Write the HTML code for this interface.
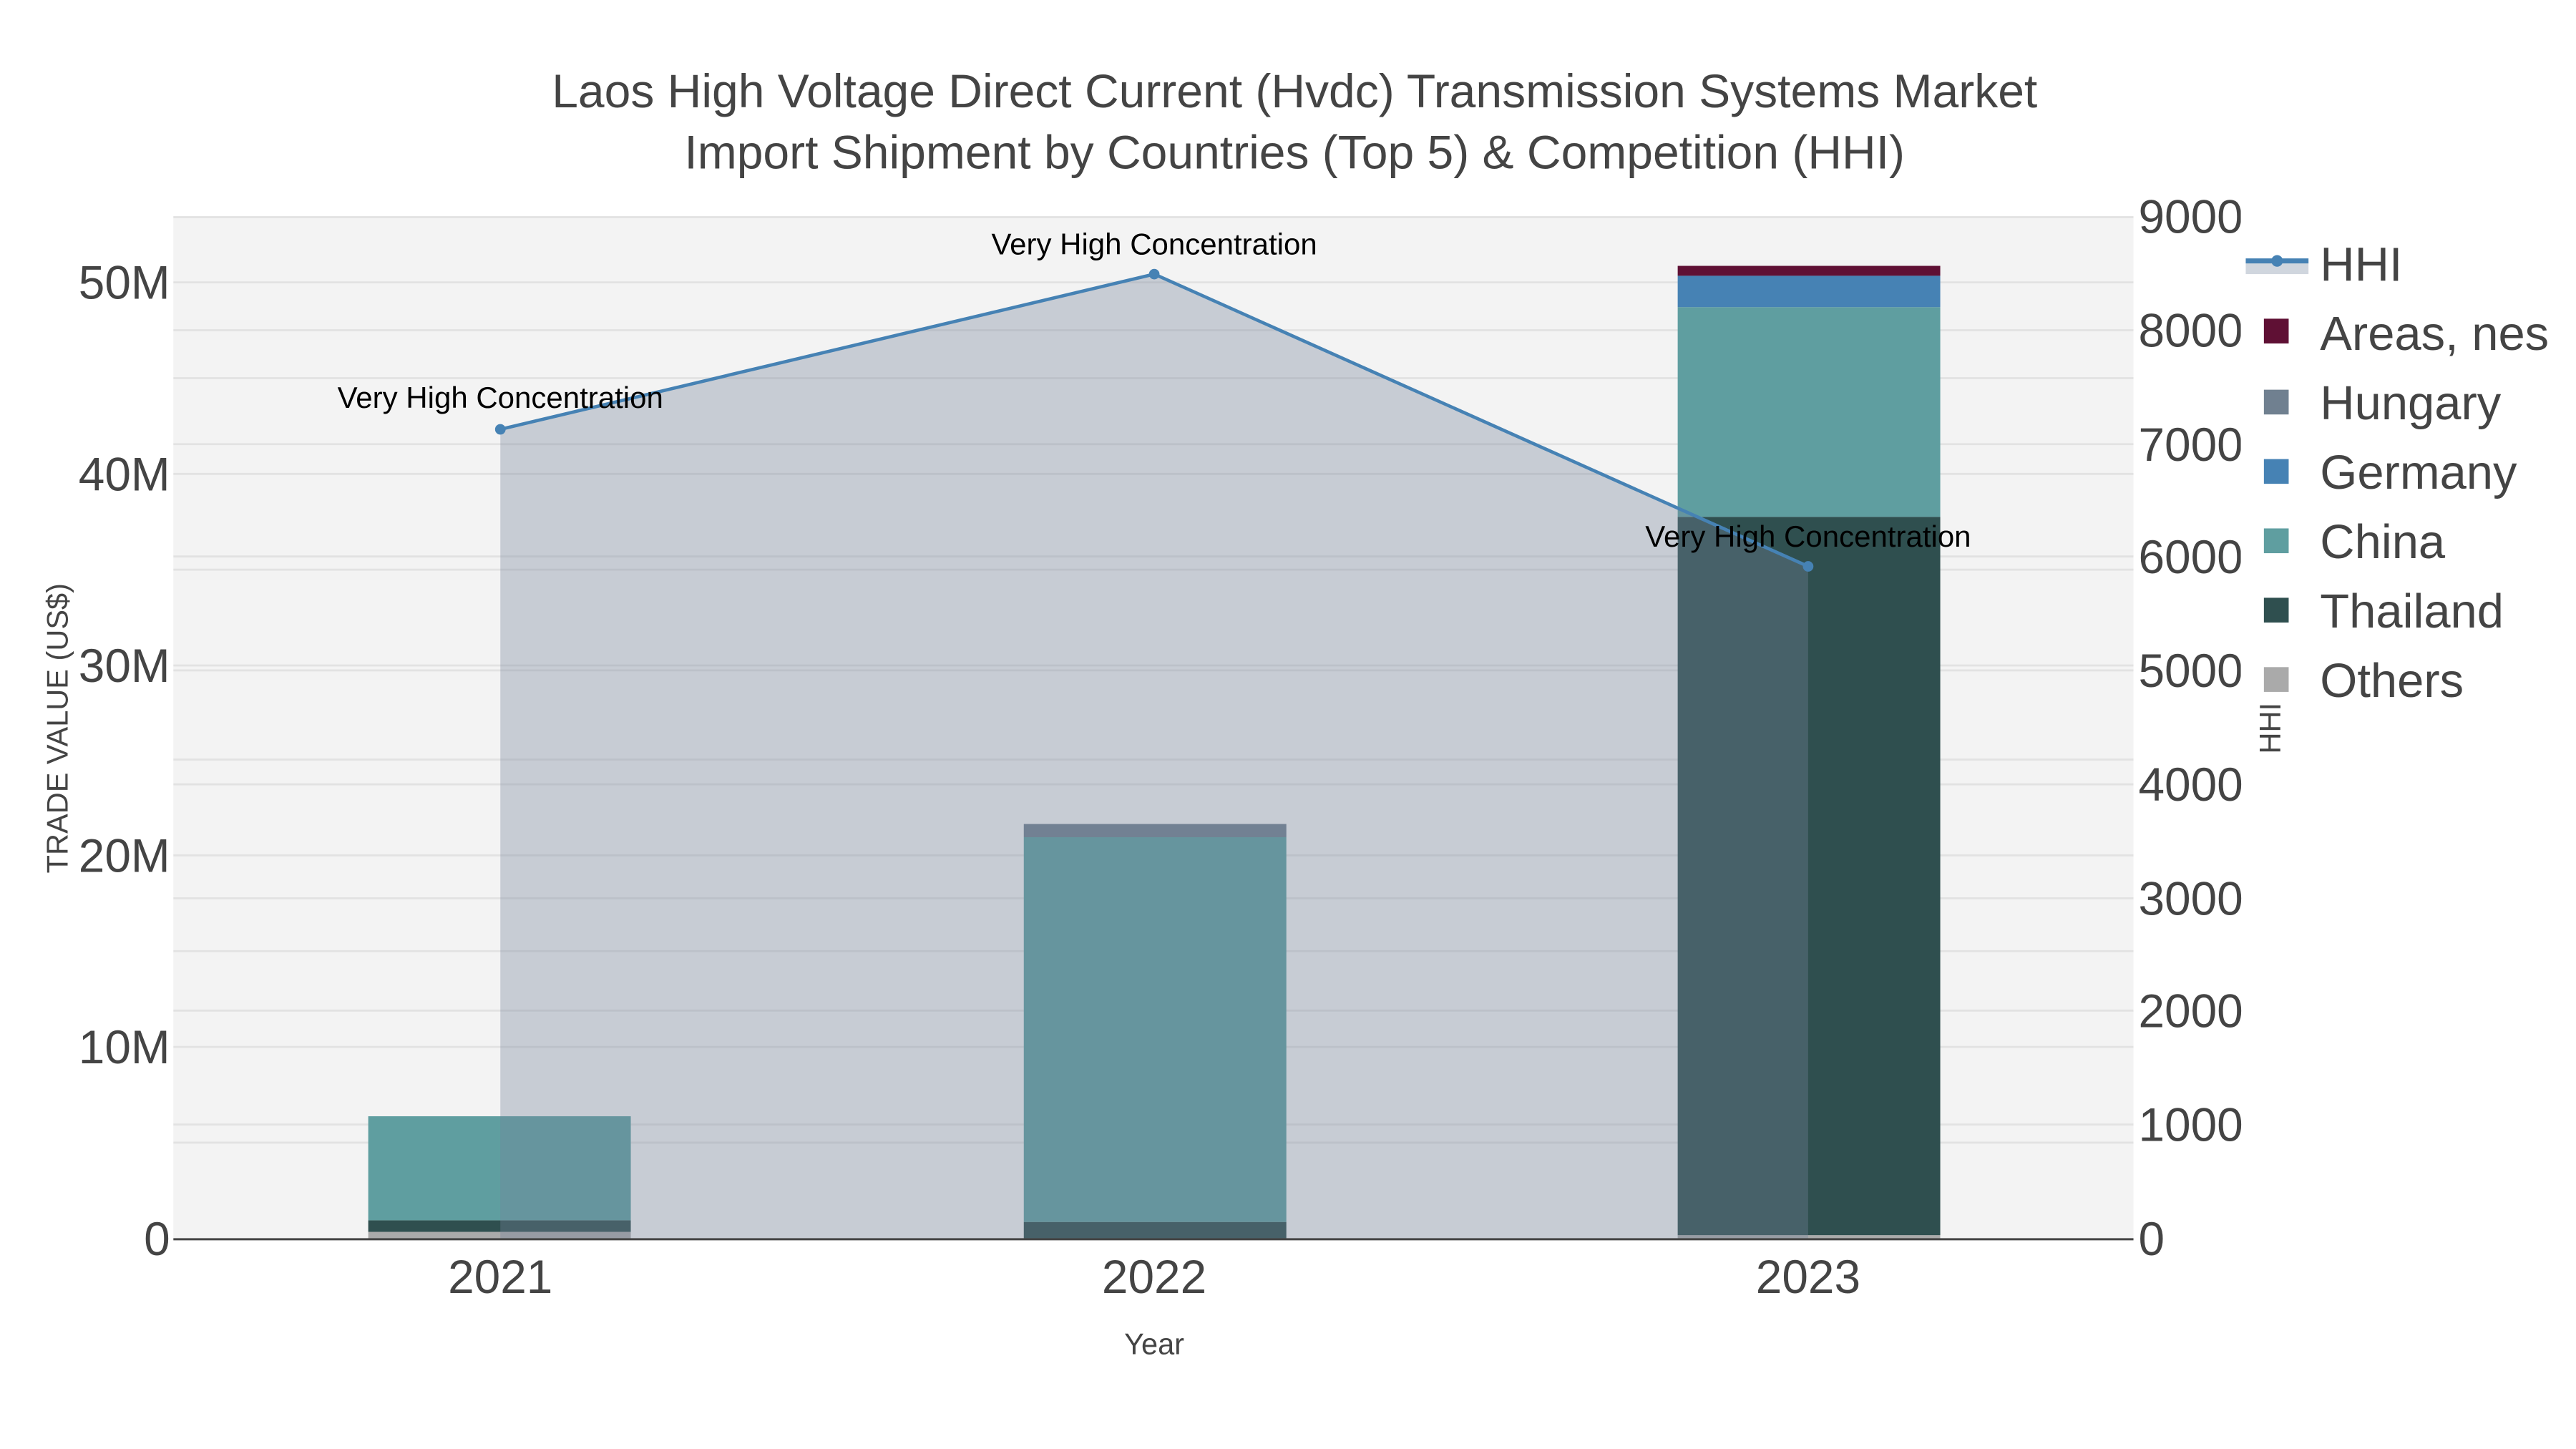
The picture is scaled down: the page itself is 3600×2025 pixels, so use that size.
<!DOCTYPE html>
<html><head><meta charset="utf-8"><style>
html,body{margin:0;padding:0;background:#fff;}
svg{display:block;}
text{font-family:"Liberation Sans",sans-serif;}
</style></head><body>
<svg width="3600" height="2025" viewBox="0 0 1560 877.5" xmlns="http://www.w3.org/2000/svg">
<rect x="0" y="0" width="1560" height="877.5" fill="#fff"/>
<text x="784" y="65" font-size="28.6" fill="#444" text-anchor="middle">Laos High Voltage Direct Current (Hvdc) Transmission Systems Market</text>
<text x="784" y="102" font-size="28.6" fill="#444" text-anchor="middle">Import Shipment by Countries (Top 5) &amp; Competition (HHI)</text>
<rect x="105" y="131" width="1187" height="619" fill="#f3f3f3"/>
<g stroke="#e2e2e2" stroke-width="1.2">
<line x1="105" x2="1292" y1="131.5" y2="131.5"/>
<line x1="105" x2="1292" y1="692" y2="692"/>
<line x1="105" x2="1292" y1="634" y2="634"/>
<line x1="105" x2="1292" y1="576" y2="576"/>
<line x1="105" x2="1292" y1="518" y2="518"/>
<line x1="105" x2="1292" y1="460" y2="460"/>
<line x1="105" x2="1292" y1="403" y2="403"/>
<line x1="105" x2="1292" y1="345" y2="345"/>
<line x1="105" x2="1292" y1="287" y2="287"/>
<line x1="105" x2="1292" y1="229" y2="229"/>
<line x1="105" x2="1292" y1="171" y2="171"/>
<line x1="105" x2="1292" y1="681" y2="681"/>
<line x1="105" x2="1292" y1="612" y2="612"/>
<line x1="105" x2="1292" y1="544" y2="544"/>
<line x1="105" x2="1292" y1="475" y2="475"/>
<line x1="105" x2="1292" y1="406" y2="406"/>
<line x1="105" x2="1292" y1="337" y2="337"/>
<line x1="105" x2="1292" y1="269" y2="269"/>
<line x1="105" x2="1292" y1="200" y2="200"/>
</g>
<rect x="223" y="746" width="159" height="4" fill="#aaaaaa"/>
<rect x="223" y="739" width="159" height="7" fill="#2f4f4f"/>
<rect x="223" y="676" width="159" height="63" fill="#5f9ea0"/>
<rect x="620" y="740" width="159" height="10" fill="#2f4f4f"/>
<rect x="620" y="507" width="159" height="233" fill="#5f9ea0"/>
<rect x="620" y="499" width="159" height="8" fill="#708090"/>
<rect x="1016" y="748" width="159" height="2" fill="#aaaaaa"/>
<rect x="1016" y="313" width="159" height="435" fill="#2f4f4f"/>
<rect x="1016" y="186" width="159" height="127" fill="#5f9ea0"/>
<rect x="1016" y="167" width="159" height="19" fill="#4682b4"/>
<rect x="1016" y="161" width="159" height="6" fill="#5f1034"/>
<polygon points="303,260 699,166 1095,343 1095,750 303,750" fill="rgb(118,131,154)" fill-opacity="0.35"/>
<polyline points="303,260 699,166 1095,343" fill="none" stroke="#4682b4" stroke-width="2"/>
<circle cx="303" cy="260" r="3.2" fill="#4682b4"/>
<circle cx="699" cy="166" r="3.2" fill="#4682b4"/>
<circle cx="1095" cy="343" r="3.2" fill="#4682b4"/>
<line x1="105" x2="1292" y1="750.5" y2="750.5" stroke="#444" stroke-width="1.3"/>
<g font-size="18.2" fill="#000" text-anchor="middle">
<text x="303" y="247">Very High Concentration</text>
<text x="699" y="154">Very High Concentration</text>
<text x="1095" y="331">Very High Concentration</text>
</g>
<g font-size="28.5" fill="#444" text-anchor="end">
<text x="103" y="760">0</text>
<text x="103" y="644">10M</text>
<text x="103" y="528">20M</text>
<text x="103" y="413">30M</text>
<text x="103" y="297">40M</text>
<text x="103" y="181">50M</text>
</g>
<g font-size="28.5" fill="#444">
<text x="1295" y="760">0</text>
<text x="1295" y="691">1000</text>
<text x="1295" y="622">2000</text>
<text x="1295" y="554">3000</text>
<text x="1295" y="485">4000</text>
<text x="1295" y="416">5000</text>
<text x="1295" y="347">6000</text>
<text x="1295" y="279">7000</text>
<text x="1295" y="210">8000</text>
<text x="1295" y="141">9000</text>
</g>
<rect x="1357" y="115" width="203" height="330" fill="#fff"/>
<g font-size="28.5" fill="#444" text-anchor="middle">
<text x="303" y="783">2021</text>
<text x="699" y="783">2022</text>
<text x="1095" y="783">2023</text>
</g>
<text x="699" y="820" font-size="18" fill="#444" text-anchor="middle">Year</text>
<text transform="translate(41,441) rotate(-90)" font-size="18" fill="#444" text-anchor="middle">TRADE VALUE (US$)</text>
<text transform="translate(1381,441) rotate(-90)" font-size="18" fill="#444" text-anchor="middle">HHI</text>
<rect x="1360" y="158" width="38" height="8" fill="#d0d6de"/>
<line x1="1360" x2="1398" y1="158" y2="158" stroke="#4682b4" stroke-width="3"/>
<circle cx="1379" cy="158" r="3.5" fill="#4682b4"/>
<rect x="1371" y="193" width="15" height="15" fill="#5f1034"/>
<rect x="1371" y="236" width="15" height="15" fill="#708090"/>
<rect x="1371" y="278" width="15" height="15" fill="#4682b4"/>
<rect x="1371" y="320" width="15" height="15" fill="#5f9ea0"/>
<rect x="1371" y="362" width="15" height="15" fill="#2f4f4f"/>
<rect x="1371" y="404" width="15" height="15" fill="#aaaaaa"/>
<g font-size="29" fill="#444">
<text x="1405" y="170">HHI</text>
<text x="1405" y="212">Areas, nes</text>
<text x="1405" y="254">Hungary</text>
<text x="1405" y="296">Germany</text>
<text x="1405" y="338">China</text>
<text x="1405" y="380">Thailand</text>
<text x="1405" y="422">Others</text>
</g>
</svg>
</body></html>
